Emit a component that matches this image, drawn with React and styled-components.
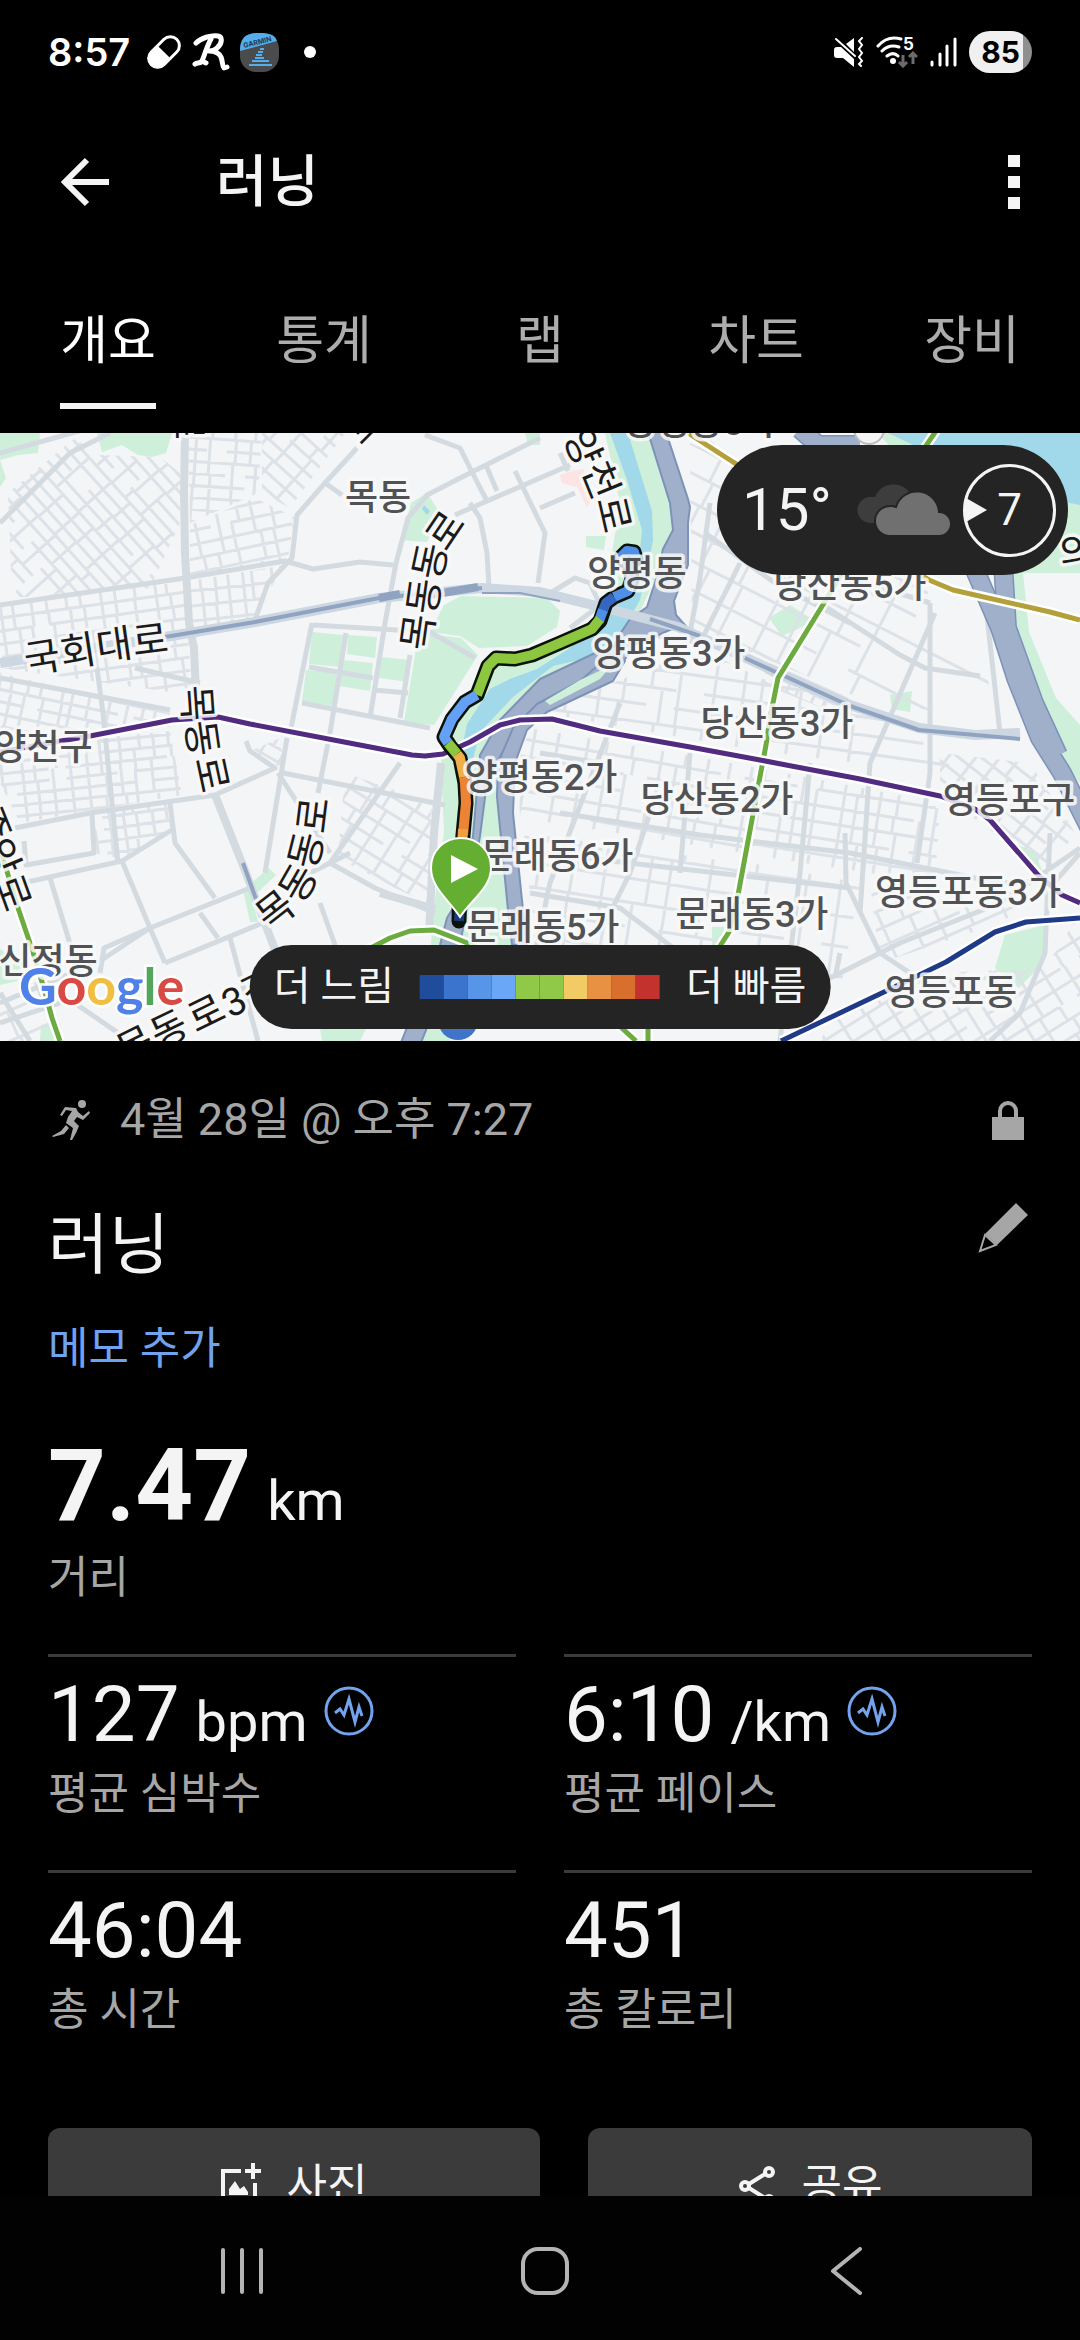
import React from "react";
import styled, { createGlobalStyle } from "styled-components";

const GlobalStyle = createGlobalStyle`
  * {
    box-sizing: border-box;
  }

  body {
    margin: 0;
    background: #000;
    font-family: Roboto, "Noto Sans CJK KR", sans-serif;
  }

  button {
    font: inherit;
    color: inherit;
    background: none;
    border: none;
    padding: 0;
    cursor: pointer;
  }

  svg {
    display: block;
  }
`;

const Screen = styled.div`
  display: flex;
  flex-direction: column;
  height: 100vh;
  background: #000;
  color: #f4f4f4;
`;

const StatusBar = styled.div`
  display: flex;
  flex-shrink: 0;
  align-items: center;
  justify-content: space-between;
  height: 104px;
  padding: 0 48px;
`;

const StatusGroup = styled.div`
  display: flex;
  align-items: center;
  gap: ${(props) => props.$gap}px;
`;

const Clock = styled.time`
  font-family: Inter, sans-serif;
  font-weight: 600;
  font-size: 38px;
  color: #fff;
  margin-right: 6px;
`;

const Dot = styled.span`
  width: 12px;
  height: 12px;
  margin-left: 15px;
  border-radius: 50%;
  background: #fff;
`;

const Battery = styled.span`
  display: flex;
  align-items: center;
  justify-content: center;
  width: 63px;
  height: 42px;
  border-radius: 21px;
  background: linear-gradient(90deg, #f0f0f0 85%, #8f8f8f 85%);
  color: #000;
  font-family: Inter, sans-serif;
  font-weight: 700;
  font-size: 30px;
`;

const AppBar = styled.header`
  display: flex;
  flex-shrink: 0;
  align-items: center;
  height: 156px;
  padding: 0 48px 0 60px;

  h1 {
    flex: 1;
    margin: 0 0 0 106px;
    font-weight: 500;
    font-size: 56px;
    line-height: 72px;
  }
`;

const IconButton = styled.button`
  display: flex;
  align-items: center;
  justify-content: center;
  flex-shrink: 0;
`;

const Tabs = styled.nav`
  display: flex;
  flex-shrink: 0;
  padding-bottom: 24px;
`;

const TabSlot = styled.div`
  flex: 1;
  display: flex;
  justify-content: center;
`;

const Tab = styled.button`
  padding: 52px 0 31px;
  border-bottom: 6px solid ${(props) => (props.$active ? "#f4f4f4" : "transparent")};
  color: ${(props) => (props.$active ? "#fff" : "#adadad")};
  font-size: 52px;
  line-height: 60px;
`;

const Content = styled.main`
  flex: 1;
  min-height: 0;
  overflow-y: auto;
  scrollbar-width: none;
`;

const MapPanel = styled.section`
  position: relative;
  height: 608px;
  overflow: hidden;
  background: #f4f5f6;

  > svg {
    width: 100%;
    height: 100%;
  }
`;

const WeatherBadge = styled.div`
  position: absolute;
  top: 12px;
  right: 12px;
  display: flex;
  align-items: center;
  gap: 12px;
  height: 130px;
  padding: 0 12px 0 25px;
  border-radius: 65px;
  background: #242424;
`;

const Temperature = styled.span`
  width: 103px;
  font-size: 60px;
  line-height: 76px;
`;

const WindDial = styled.div`
  position: relative;
  display: flex;
  align-items: center;
  justify-content: center;
  width: 93px;
  height: 93px;
  border: 3px solid #f4f4f4;
  border-radius: 50%;
  font-size: 44px;
  line-height: 52px;

  svg {
    position: absolute;
    left: 0;
    top: 31px;
  }
`;

const PaceLegend = styled.div`
  position: absolute;
  bottom: 12px;
  left: 50%;
  transform: translateX(-50%);
  display: flex;
  align-items: center;
  gap: 26px;
  height: 84px;
  padding: 0 24px;
  border-radius: 42px;
  background: #242424;
  font-size: 40px;
  line-height: 52px;
  white-space: nowrap;
`;

const PaceScale = styled.div`
  display: flex;
`;

const PaceStep = styled.span`
  width: 24px;
  height: 24px;
  background: ${(props) => props.$color};
`;

const Details = styled.section`
  padding: 49px 48px 0;
`;

const MetaRow = styled.div`
  display: flex;
  align-items: center;
  height: 60px;
  padding: 0 8px 0 4px;
  color: #a6a6a6;
  font-size: 45px;

  time {
    flex: 1;
    margin-left: 30px;
    line-height: 60px;
  }
`;

const TitleRow = styled.div`
  display: flex;
  align-items: flex-start;
  justify-content: space-between;
  margin-top: 53px;
  padding-right: 4px;

  h2 {
    margin: 0;
    font-weight: 400;
    font-size: 66px;
    line-height: 86px;
  }
`;

const MemoButton = styled.button`
  display: block;
  margin-top: 30px;
  color: #6fa3f0;
  font-size: 44px;
  line-height: 60px;
`;

const Stat = styled.div`
  display: flex;
  flex-direction: column;
  gap: 11px;
  padding: ${(props) => (props.$hero ? "52px 0 50px" : "16px 0 50px")};
  border-top: ${(props) => (props.$hero ? "none" : "3px solid #3b3b3b")};
`;

const StatValue = styled.div`
  display: flex;
  align-items: baseline;
  gap: 16px;
  height: ${(props) => (props.$hero ? 110 : 84)}px;
  font-weight: ${(props) => (props.$hero ? 700 : 400)};
  font-size: ${(props) => (props.$hero ? 101 : 78)}px;
  line-height: ${(props) => (props.$hero ? 110 : 84)}px;

  small {
    font-weight: 400;
    font-size: 56px;
  }

  svg {
    align-self: flex-start;
    margin-top: 13px;
  }
`;

const StatLabel = styled.div`
  color: #a6a6a6;
  font-size: 44px;
  line-height: 52px;
`;

const StatGrid = styled.div`
  display: grid;
  grid-template-columns: 1fr 1fr;
  column-gap: 48px;
`;

const Actions = styled.div`
  display: flex;
  gap: 48px;
  margin-top: 42px;
  padding-bottom: 60px;
`;

const ActionButton = styled.button`
  display: flex;
  flex: ${(props) => props.$grow} 1 0;
  align-items: center;
  justify-content: center;
  gap: 26px;
  height: 116px;
  border-radius: 12px;
  background: #3b3b3b;
  font-size: 44px;
  line-height: 60px;
`;

const SystemNav = styled.nav`
  display: flex;
  flex-shrink: 0;
  align-items: center;
  justify-content: space-between;
  height: 144px;
  padding: 6px 209px 0 218px;
  background: #020202;
`;

/* map geometry, in a 1080 x 608 space */

const parks = [
  "M0 0H40L38 20 18 22 0 27Z",
  "M0 27 6 45 0 54Z",
  "M97 0H172L166 20 152 24 138 22 122 12 102 19Z",
  "M411 70 427 60 440 80 427 109 401 107Z",
  "M312 199 343 202 341 234 309 231Z",
  "M348 202 377 204 375 225 347 221Z",
  "M306 237 337 239 334 273 302 269Z",
  "M343 227 373 230 370 258 339 253Z",
  "M380 224 410 227 408 249 379 245Z",
  "M444 172 461 163 547 165 560 178 557 194 527 213 479 215 460 203 430 199Z",
  "M415 222 418 200 461 205 478 222 434 292 404 289Z",
  "M605 0H648L671 70 673 97 657 143 640 178 622 205 593 221 540 246 500 287 480 322 473 403 447 485 440 512H431L433 480 444 400 441 330 446 300 478 262 500 226 545 222 600 192 612 120 620 70Z",
  "M487 345 498 345 508 477 520 477 520 512H462L470 440 480 403Z",
  "M243 457 269 435 276 442 252 465 258 489H250Z",
  "M320 595 368 592 360 608H322Z",
  "M418 608 425 592H450V608Z",
  "M41 592 60 590 64 608H40Z",
  "M0 516 22 530 18 548 0 552Z",
  "M995 535 1005 502 1044 492V529L1019 555Z",
  "M769 185 790 172 815 188 782 203Z",
  "M890 262 912 258 910 279 892 276Z",
  "M586 103 606 103 604 117 586 114Z",
  "M712 494H726L722 512H712Z",
  "M878 0H1080V140H1000Z",
  "M1005 130H1022L1029 199 1056 265 1080 292V350L1060 325 1036 265 1012 180Z",
  "M1018 412 1036 420 1042 438 1030 436Z",
  "M525 0H540V12H528Z",
];

const water = [
  "M888 0H1080V72L1060 68 930 20Z",
  "M610 0H628L652 78 653 108 640 167 620 202 587 225 553 233 513 264 480 299 473 326 462 350 458 340 463 310 467 291 490 256 510 246 537 236 567 217 593 194 613 171 637 147 642 97 627 47Z",
  "M424 72 430 78 427 82 422 76Z",
];

const riverRoads = [
  "M647 -4H665L688 66 690 74 688 90V132L674 168 676 182 692 200 672 196 640 210 613 214 622 198 630 186 647 174 657 143 663 116 673 97 670 70Z",
  "M593 221 540 246 500 287 480 322 473 403 463 458 447 485 440 512 400 612H420L460 512 480 403 487 349 513 299 547 268 623 229 640 205Z",
  "M580 248 537 271 513 295 498 330 497 364 508 477 512 512H527L523 477 513 380 515 330 527 297 547 279 613 248 625 228 610 222Z",
];

const highways = [
  "M972 130 1000 195 1016 245 1040 305 1062 340 1092 400",
  "M1003 130 1007 195 1034 270 1058 322",
  "M800 -4 818 12 860 12",
];

const mainRoads = [
  "M0 172 185 145 285 128 313 136 360 129 393 132",
  "M357 15 325 50 297 82 292 125 268 150 255 187",
  "M325 50 342 62",
  "M540 5 470 40 427 62 408 85 396 130 385 190 370 285",
  "M425 2 460 15 475 45 487 68",
  "M470 70 480 85 487 120 489 155",
  "M455 82 540 45 570 32",
  "M515 38 545 100 538 150M485 30 497 58M560 20 568 38",
  "M0 245 170 277M135 235 200 250",
  "M97 235 103 280 118 430",
  "M312 190 290 300M302 270 430 295M313 192 430 199 475 225",
  "M346 200 330 300 318 360M309 234 373 245M374 257 408 260",
  "M410 222 400 285",
  "M15 395 90 380 215 362 275 335 250 318 246 308",
  "M283 340 445 372M287 305 265 440",
  "M92 382 94 420 26 432 24 408M0 455 122 428 175 395",
  "M170 370 175 410 215 465",
  "M50 445 85 560M122 428 150 495",
  "M0 570 100 528 150 495 250 455M150 495 165 530",
  "M100 540 104 515 150 495M165 530 275 485M200 480 218 505M230 505 258 608",
  "M330 430 400 330M330 430 375 455 435 480M320 470 345 540",
  "M0 590 60 570M0 560 30 608M60 560 130 608",
  "M350 420 290 450M278 340 330 420",
  "M710 70 700 145 690 200M740 130 700 210 640 200",
  "M820 170 900 222 925 235 980 243M935 180 870 330 860 480",
  "M930 170V340L917 430M985 165 1000 300",
  "M700 0 760 60M705 100 775 150 850 190",
  "M540 320 600 330M620 270 550 450 535 520",
  "M560 380 700 402 850 420 1000 450 1040 448",
  "M540 420 700 438 850 455M530 460 620 475 680 520",
  "M650 380 630 440 600 500M690 320 680 440M810 330 800 440 780 608",
  "M845 400 846 450 880 520 940 560M840 520 835 545",
  "M1050 400 1045 520 1020 580 990 608M1080 420 1045 460",
  "M820 550 900 510 1000 470 1080 415",
  "M930 170 770 120M0 20 90 -5M0 90 70 20 110 0",
  "M540 75 575 60M547 162 575 145 590 150 600 172M570 195 600 172",
];

// blocks of side streets: outline, street angle, spacing across and along
const blocks = [
  { area: "M8 60 75 5 95 22 160 24 180 40 180 90 150 155 12 165Z", angle: 48, across: 11, along: 26 },
  { area: "M0 172 183 148 188 200 192 262 0 235Z", angle: -8, across: 13, along: 17 },
  { area: "M0 240 170 280 170 296 0 300Z", angle: 12, across: 12, along: 16 },
  { area: "M188 0H262L258 60 190 90Z", angle: 4, across: 12, along: 20 },
  { area: "M262 0H345L290 75 262 60Z", angle: 42, across: 13, along: 22 },
  { area: "M190 92 255 65 294 84 288 126 190 142Z", angle: -12, across: 14, along: 20 },
  { area: "M190 148 285 132 252 185 192 196Z", angle: -6, across: 15, along: 14 },
  { area: "M0 315 170 298 182 362 20 390 0 350Z", angle: -6, across: 11, along: 17 },
  { area: "M92 382 170 370 172 395 122 426 94 420Z", angle: -8, across: 12, along: 15 },
  { area: "M345 340 432 370 428 470 395 455 338 425Z", angle: 32, across: 15, along: 22 },
  { area: "M246 320 280 305 284 335Z", angle: 30, across: 12, along: 16 },
  { area: "M0 560 50 545 60 608H0Z", angle: -24, across: 28, along: 32 },
  { area: "M690 10 760 40 930 148 960 150 1000 290 860 265 740 215 692 190Z", angle: 27, across: 26, along: 36 },
  { area: "M770 230 850 265 830 278 760 250Z", angle: 25, across: 10, along: 14 },
  { area: "M600 255 700 215 760 245 1010 310 1020 350 760 318 600 290 545 280Z", angle: 8, across: 18, along: 28 },
  { area: "M530 295 760 335 745 420 520 385 518 330Z", angle: 10, across: 17, along: 24 },
  { area: "M760 335 940 370 935 450 740 420Z", angle: 9, across: 16, along: 20 },
  { area: "M524 400 740 430 720 520 535 512Z", angle: 9, across: 24, along: 34 },
  { area: "M750 430 860 450 840 560 730 530Z", angle: 8, across: 30, along: 38 },
  { area: "M870 450 1045 460 1000 490 880 530Z", angle: -24, across: 17, along: 30 },
  { area: "M940 320 1030 330 1075 400 1048 440 940 360Z", angle: 38, across: 14, along: 19 },
  { area: "M830 590 940 540 1045 535 1080 480V608H820Z", angle: -32, across: 16, along: 22 },
];

const subways = [
  { color: "#b3a03a", d: "M688 0 733 29 800 70 929 147 953 157 1050 179 1080 187" },
  { color: "#6bab3f", d: "M936 -2 860 110 824 170 778 245 770 285 766 312 759 349 738 462 729 499 690 560" },
  { color: "#6bab3f", d: "M365 518 390 505 410 498 434 497 465 509 540 545 600 575 636 608M648 595V608" },
  { color: "#6bab3f", d: "M0 415 17 472 33 519 45 559 52 585 60 608" },
  {
    color: "#512b80",
    d: "M0 319 55 309 90 303 172 287 218 284 250 291 365 313 412 322 425 323 443 321 470 309 500 292 520 287 552 286 600 298 690 314 760 327 860 346 940 363 975 376 990 387 1038 442 1062 462 1080 470",
  },
  { color: "#1f3a86", d: "M781 608 884 559 946 529 995 499 1026 489 1080 485" },
];

const route =
  "M636 126 634 119 627 118 621 124 630 134 632 146 628 158 614 164 606 170 600 188 592 196 560 210 532 222 515 226 496 225 488 233 477 262 465 269 452 286 444 304 450 313 460 325 465 350 466 370 463 402 460 440 459 488";

const routeParts = [
  { color: "#4f8fe8", d: "M636 126 634 119 627 118 621 124 630 134 632 146 628 158 614 164" },
  { color: "#3566c0", d: "M614 164 606 170 602 180" },
  { color: "#4f8fe8", d: "M603 177 599 188" },
  { color: "#8dc63f", d: "M600 186 592 196 560 210 532 222 515 226 496 225 488 233 477 262" },
  { color: "#64a0f5", d: "M477 262 465 269 452 286 444 304 448 310" },
  { color: "#8dc63f", d: "M448 310 457 321" },
  { color: "#efb04a", d: "M457 321 460 325 464 344" },
  { color: "#ec8335", d: "M464 344 465 350 466 370 463 402" },
  { color: "#f0a03f", d: "M463 396 462 412" },
  { color: "#1c3c78", d: "M460 470 459 488" },
];

const places = [
  ["목동", 378, 77],
  ["양평동5가", 700, 2],
  ["양평동", 637, 153],
  ["양평동3가", 669, 233],
  ["당산동5가", 850, 165],
  ["당산동3가", 777, 303],
  ["당산동2가", 717, 379],
  ["양평동2가", 541, 357],
  ["문래동6가", 557, 436],
  ["문래동5가", 543, 507],
  ["문래동3가", 752, 494],
  ["영등포구", 1009, 380],
  ["영등포동3가", 968, 472],
  ["영등포동", 951, 572],
  ["양천구", 43, 327],
  ["신정동", 48, 541],
];

// street names follow their street: character, centre, angle
const streetNames = [
  [["국", 42, 224, -9], ["회", 78, 218, -9], ["대", 114, 212, -8], ["로", 150, 207, -7]],
  [["목", 197, 270, 86], ["동", 202, 305, 82], ["로", 212, 341, 78]],
  [["목", 418, 199, -82], ["동", 424, 163, -82], ["동", 430, 128, -78], ["로", 445, 97, -56]],
  [["목", 275, 477, -38], ["동", 298, 450, -60], ["동", 306, 417, -76], ["로", 313, 382, -83]],
  [["양", 583, 14, 66], ["천", 601, 47, 68], ["로", 614, 81, 77]],
  [["중", -8, 392, 68], ["앙", 2, 424, 68], ["로", 13, 459, 70]],
  [["목", 135, 612, -26], ["동", 169, 596, -26], ["로", 206, 580, -26], ["3", 234, 568, -26], ["길", 260, 556, -26]],
  [["로", 189, -11, 90]],
  [["로", 364, -9, -45]],
  [["의", 1077, 119, -8]],
];

function sideStreets(index, across, along) {
  let seed = index * 97 + 13;
  const random = () => {
    seed = (seed * 9301 + 49297) % 233280;
    return seed / 233280;
  };
  const parts = [];
  for (let y = -260; y < 260; y += across) {
    let x = -260;
    while (x < 260) {
      const length = along * (2 + Math.floor(random() * 5));
      parts.push(`M${x} ${y}h${length}`);
      x += length + (random() > 0.6 ? along : 0);
    }
  }
  for (let x = -260; x < 260; x += along) {
    let y = -260;
    while (y < 260) {
      const length = across * (1 + Math.floor(random() * 4));
      const shift = Math.round(random() * along * 0.5);
      parts.push(`M${x + shift} ${y}v${length}`);
      y += length;
    }
  }
  return parts.join("");
}

function areaStart(area) {
  const [x, y] = area.slice(1).split(/[\s A-Z]+/).map(Number);
  return `${x} ${y}`;
}

const RouteMap = () => (
  <svg viewBox="0 0 1080 608" preserveAspectRatio="xMidYMid slice" role="img" aria-label="러닝 경로 지도">
    <g fill="#ceefd9">
      {parks.map((d) => (
        <path key={d} d={d} />
      ))}
    </g>
    <path d="M560 42 572 38 584 36 582 52 594 64 587 74 577 54 562 50Z" fill="#fbe4e1" />
    <g fill="#a1d8ea">
      {water.map((d) => (
        <path key={d} d={d} />
      ))}
    </g>
    {blocks.map((block, i) => (
      <g key={block.area} clipPath={`url(#block-${i})`}>
        <clipPath id={`block-${i}`}>
          <path d={block.area} />
        </clipPath>
        <path
          d={sideStreets(i, block.across, block.along)}
          transform={`translate(${areaStart(block.area)}) rotate(${block.angle})`}
          fill="none"
          stroke="#dce2e7"
          strokeWidth="3"
        />
      </g>
    ))}
    <g fill="none" stroke="#d3dbe1" strokeWidth="5" strokeLinejoin="round">
      {mainRoads.map((d) => (
        <path key={d} d={d} />
      ))}
      <path d="M185 0 184 60 185 120 189 190 194 215 196 262M215 362 246 440 280 530" strokeWidth="8" />
      <path d="M380 460 435 476M441 330 434 400 429 500" strokeWidth="8" />
    </g>
    <g fill="#a0b0cb" stroke="#7c92b8" strokeWidth="2" strokeLinejoin="round">
      {riverRoads.map((d) => (
        <path key={d} d={d} />
      ))}
    </g>
    <path d="M545 268 580 247 612 232 600 246 550 272Z" fill="#ceefd9" />
    <g fill="none" strokeLinejoin="round">
      {highways.map((d) => (
        <path key={d} d={d} stroke="#7c92b8" strokeWidth="20" />
      ))}
      {highways.map((d) => (
        <path key={d} d={d} stroke="#a0b0cb" strokeWidth="17" />
      ))}
      <path
        d="M0 230 165 204 255 189 379 165 482 155 540 159 609 176 678 194 733 219 798 249 850 272 919 295 975 302 1020 300"
        stroke="#cdd7e1"
        strokeWidth="10"
      />
      <path d="M165 204 255 189 379 165 482 155M650 186 700 203M745 225 850 273 919 297 1020 306" stroke="#90a3c1" strokeWidth="4" />
      <path d="M379 165 400 161M430 162 478 154" stroke="#90a3c1" strokeWidth="8" />
      <path d="M482 160H520L560 168" stroke="#90a3c1" strokeWidth="2" />
      <path d="M243 430 256 466" stroke="#90a3c1" strokeWidth="4" />
    </g>
    <g fill="none" strokeLinejoin="round">
      {subways.map((line) => (
        <g key={line.d}>
          <path d={line.d} stroke="#fff" strokeWidth="10" />
          <path d={line.d} stroke={line.color} strokeWidth="5" />
        </g>
      ))}
    </g>
    <circle cx="869" cy="-4" r="15" fill="#f4f4f4" stroke="#bdbdbd" strokeWidth="2" />
    <circle cx="458" cy="587" r="20" fill="#3f74c9" />
    <g fill="none" strokeLinejoin="round">
      <path d={route} stroke="#0b1208" strokeWidth="15" strokeLinecap="round" />
      {routeParts.map((part) => (
        <path key={part.d} d={part.d} stroke={part.color} strokeWidth="10" />
      ))}
    </g>
    <g
      fontFamily="Roboto, 'Noto Sans CJK KR', sans-serif"
      textAnchor="middle"
      stroke="#f9f9f9"
      strokeOpacity="0.85"
      strokeWidth="7"
      strokeLinejoin="round"
      paintOrder="stroke"
    >
      <g fontSize="36" fontWeight="500" fill="#505254">
        {places.map(([name, x, y]) => (
          <text key={name} x={x} y={y}>
            {name}
          </text>
        ))}
      </g>
      <g fontSize="39" fill="#1b1b1b">
        {streetNames.map((chars, i) => (
          <g key={i}>
            {chars.map(([char, x, y, angle]) => (
              <text key={x} transform={`translate(${x} ${y}) rotate(${angle})`} y="14">
                {char}
              </text>
            ))}
          </g>
        ))}
      </g>
    </g>
    <path
      d="M461 405c17 0 30 13 30 30 0 20-20 32-31 49-11-17-29-29-29-49 0-17 13-30 30-30Z"
      fill="#64ae32"
      stroke="#fff"
      strokeWidth="2"
    />
    <path d="M451 422 478 436 451 450Z" fill="#fff" />
    <text
      x="19"
      y="572"
      fontFamily="Lato, sans-serif"
      fontSize="52"
      fontWeight="700"
      stroke="#fff"
      strokeWidth="5"
      paintOrder="stroke"
    >
      <tspan fill="#4f81e8">G</tspan>
      <tspan fill="#d84a43">o</tspan>
      <tspan fill="#f0bf42">o</tspan>
      <tspan fill="#4f81e8">g</tspan>
      <tspan fill="#53a65c">l</tspan>
      <tspan fill="#d84a43">e</tspan>
    </text>
  </svg>
);

const PillIcon = () => (
  <svg width="36" height="36" viewBox="0 0 36 36">
    <g transform="rotate(45 18 18)">
      <rect x="9" y="0" width="18" height="36" rx="9" fill="none" stroke="#fff" strokeWidth="3" />
      <path d="M8 18H28V27a10 10 0 0 1-20 0Z" fill="#fff" />
    </g>
  </svg>
);

const RunLogo = () => (
  <svg width="38" height="38" viewBox="0 0 38 38" fill="none" stroke="#fff" strokeWidth="5" strokeLinecap="round" strokeLinejoin="round">
    <path d="M4 10C9 5 19 2 26 3c5 1 4 8-1 12-2 2-5 3-8 3 5 0 10 2 12 6 2 5 1 9 3 11l3-1" />
    <path d="M19 6C15 13 13 21 10 28c-2 3-5 1-7 3M10 28l4 2" />
  </svg>
);

const ConnectLogo = () => (
  <svg width="39" height="39" viewBox="0 0 39 39">
    <rect width="39" height="39" rx="16" fill="#4a4b4d" />
    <path d="M0 18C0 5 5 0 19 0c11 0 16 2 18 8Z" fill="#55aeea" />
    <text x="4" y="15" fontFamily="Inter, sans-serif" fontSize="7" fontWeight="700" fill="#1d3a55" transform="rotate(-14 4 15)">
      GARMIN
    </text>
    <path d="M20 16h4M18 19h5M16 22h6M15 25h9M12 28h17M9 32h23" stroke="#55aeea" strokeWidth="2" />
  </svg>
);

const MuteIcon = () => (
  <svg width="30" height="30" viewBox="0 0 30 30">
    <path d="M0 13q0-3 3-3h4L20 22v8L9 21H3q-3 0-3-3ZM12 7l8-6v14Z" fill="#fff" />
    <path d="M2 2 21 19M28 1l-3 3 3 4-3 4 3 4-3 4 3 4-3 3 2 2" fill="none" stroke="#fff" strokeWidth="2" strokeLinecap="round" />
  </svg>
);

const WifiIcon = () => (
  <svg width="42" height="32" viewBox="0 0 42 32">
    <g fill="none" stroke="#fff" strokeWidth="3" strokeLinecap="round">
      <path d="M2 10C9 2 18 1 25 3M6 15c5-5 11-6 17-4M11 20c4-3 8-3 11 0" />
    </g>
    <circle cx="17" cy="25" r="3" fill="#fff" />
    <text x="27" y="14" fontFamily="Inter, sans-serif" fontSize="17" fontWeight="700" fill="#fff">
      5
    </text>
    <path d="M27 19v11M23 26l4 4 4-4M37 28V17M33 21l4-4 4 4" fill="none" stroke="#6c6c6c" strokeWidth="3" />
  </svg>
);

const SignalIcon = () => (
  <svg width="27" height="30" viewBox="0 0 27 30" stroke="#fff" strokeWidth="3" strokeLinecap="round">
    <path d="M2 25v3M10 17v11M17 9v19M25 2v26" />
  </svg>
);

const BackArrow = () => (
  <svg width="50" height="50" viewBox="0 0 50 50" fill="none" stroke="#f4f4f4" strokeWidth="6">
    <path d="M49 25H5M27 3 5 25 27 47" />
  </svg>
);

const MoreIcon = () => (
  <svg width="36" height="54" viewBox="0 0 36 54" fill="#f4f4f4">
    <path d="M12 0h12v12H12ZM12 21h12v12H12ZM12 42h12v12H12Z" />
  </svg>
);

const CloudsIcon = () => (
  <svg width="94" height="54" viewBox="0 0 94 54">
    <path d="M14 40a13 13 0 0 1-1-26 12 12 0 0 1 5 0A20 20 0 0 1 53 10L44 40Z" fill="#3d3d3d" />
    <path
      d="M33 53a15 15 0 0 1 0-30 14 14 0 0 1 6 1A22 22 0 0 1 82 29a12 12 0 0 1 0 24Z"
      fill="#707070"
      stroke="#242424"
      strokeWidth="2"
    />
  </svg>
);

const RunnerIcon = () => (
  <svg width="38" height="42" viewBox="0 0 38 42">
    <circle cx="30" cy="5" r="4" fill="#a6a6a6" />
    <path d="M13 8 24 9 26 13 31 17 37 12 38 14 31 21 25 18 22 22 27 27 24 34 20 41 18 41 21 29 14 24 16 18 20 12 14 11 10 17 8 16Z" fill="#a6a6a6" />
    <path d="M14 26 17 29 12 35 1 38 0 37 9 32Z" fill="#a6a6a6" />
  </svg>
);

const LockIcon = () => (
  <svg width="32" height="40" viewBox="0 0 32 40">
    <path d="M8 20V11a8 8 0 0 1 16 0V20" fill="none" stroke="#a6a6a6" strokeWidth="4" />
    <path d="M0 17H32V40H0Z" fill="#a6a6a6" />
  </svg>
);

const PencilIcon = () => (
  <svg width="50" height="50" viewBox="0 0 50 50">
    <path d="M38 0 50 12 19 42 7 31Z" fill="#a6a6a6" />
    <path d="M7 32 2 48 18 42Z" fill="none" stroke="#a6a6a6" strokeWidth="2" />
  </svg>
);

const PulseIcon = () => (
  <svg width="50" height="50" viewBox="0 0 50 50" fill="none" stroke="#72a3ec" strokeWidth="3">
    <circle cx="25" cy="25" r="23" />
    <path d="M11 27 16 23 20 29 25 13 31 36 35 21 38 30" />
  </svg>
);

const PhotoAddIcon = () => (
  <svg width="40" height="46" viewBox="0 0 40 46">
    <path d="M20 8H2V42H34V20" fill="none" stroke="#f4f4f4" strokeWidth="4" />
    <path d="M32 0V16M24 8H40" stroke="#f4f4f4" strokeWidth="4" />
    <path d="M8 32V26L14 18 19 26 23 23 27 29V32Z" fill="#f4f4f4" />
  </svg>
);

const ShareIcon = () => (
  <svg width="38" height="42" viewBox="0 0 38 42" fill="none" stroke="#f4f4f4" strokeWidth="4">
    <circle cx="31" cy="7" r="4" />
    <circle cx="7" cy="21" r="4" />
    <circle cx="31" cy="35" r="4" />
    <path d="M11 19 27 9M11 23 27 33" />
  </svg>
);

const RecentsIcon = () => (
  <svg width="48" height="48" viewBox="0 0 48 48" stroke="#b4b4b4" strokeWidth="4" strokeLinecap="round">
    <path d="M5 3V45M24 3V45M43 3V45" />
  </svg>
);

const HomeIcon = () => (
  <svg width="48" height="48" viewBox="0 0 48 48" fill="none" stroke="#b4b4b4" strokeWidth="4">
    <rect x="2" y="2" width="44" height="44" rx="15" />
  </svg>
);

const SystemBackIcon = () => (
  <svg width="48" height="48" viewBox="0 0 48 48" fill="none" stroke="#b4b4b4" strokeWidth="4" strokeLinecap="round" strokeLinejoin="round">
    <path d="M37 2 10 24 37 46" />
  </svg>
);

const tabs = ["개요", "통계", "랩", "차트", "장비"];

const paceColors = [
  "#1f4d9c",
  "#3b74cc",
  "#5695e8",
  "#6aa7f6",
  "#90c847",
  "#90c847",
  "#f2cb65",
  "#e99143",
  "#d96f2d",
  "#c3322d",
];

const stats = [
  { value: "127", unit: "bpm", label: "평균 심박수", pulse: true },
  { value: "6:10", unit: "/km", label: "평균 페이스", pulse: true },
  { value: "46:04", label: "총 시간" },
  { value: "451", label: "총 칼로리" },
];

const App = () => {
  return (
    <>
      <GlobalStyle />
      <Screen>
        <StatusBar>
          <StatusGroup $gap={10}>
            <Clock>8:57</Clock>
            <PillIcon />
            <RunLogo />
            <ConnectLogo />
            <Dot />
          </StatusGroup>
          <StatusGroup $gap={12}>
            <MuteIcon />
            <WifiIcon />
            <SignalIcon />
            <Battery>85</Battery>
          </StatusGroup>
        </StatusBar>

        <AppBar>
          <IconButton aria-label="뒤로">
            <BackArrow />
          </IconButton>
          <h1>러닝</h1>
          <IconButton aria-label="더보기">
            <MoreIcon />
          </IconButton>
        </AppBar>

        <Tabs>
          {tabs.map((name, i) => (
            <TabSlot key={name}>
              <Tab $active={i === 0}>{name}</Tab>
            </TabSlot>
          ))}
        </Tabs>

        <Content>
          <MapPanel>
            <RouteMap />
            <WeatherBadge>
              <Temperature>15°</Temperature>
              <CloudsIcon />
              <WindDial>
                <svg width="21" height="24" viewBox="0 0 21 24">
                  <path d="M0 0 21 12 0 24Z" fill="#f4f4f4" />
                </svg>
                7
              </WindDial>
            </WeatherBadge>
            <PaceLegend>
              <span>더 느림</span>
              <PaceScale>
                {paceColors.map((color, i) => (
                  <PaceStep key={i} $color={color} />
                ))}
              </PaceScale>
              <span>더 빠름</span>
            </PaceLegend>
          </MapPanel>

          <Details>
            <MetaRow>
              <RunnerIcon />
              <time>4월 28일 @ 오후 7:27</time>
              <LockIcon />
            </MetaRow>
            <TitleRow>
              <h2>러닝</h2>
              <IconButton aria-label="이름 편집">
                <PencilIcon />
              </IconButton>
            </TitleRow>
            <MemoButton>메모 추가</MemoButton>

            <Stat $hero>
              <StatValue $hero>
                7.47 <small>km</small>
              </StatValue>
              <StatLabel>거리</StatLabel>
            </Stat>
            <StatGrid>
              {stats.map((stat) => (
                <Stat key={stat.label}>
                  <StatValue>
                    {stat.value}
                    {stat.unit && <small>{stat.unit}</small>}
                    {stat.pulse && <PulseIcon />}
                  </StatValue>
                  <StatLabel>{stat.label}</StatLabel>
                </Stat>
              ))}
            </StatGrid>

            <Actions>
              <ActionButton $grow={41}>
                <PhotoAddIcon />
                사진
              </ActionButton>
              <ActionButton $grow={37}>
                <ShareIcon />
                공유
              </ActionButton>
            </Actions>
          </Details>
        </Content>

        <SystemNav>
          <IconButton aria-label="최근 앱">
            <RecentsIcon />
          </IconButton>
          <IconButton aria-label="홈">
            <HomeIcon />
          </IconButton>
          <IconButton aria-label="뒤로 가기">
            <SystemBackIcon />
          </IconButton>
        </SystemNav>
      </Screen>
    </>
  );
};

export default App;
